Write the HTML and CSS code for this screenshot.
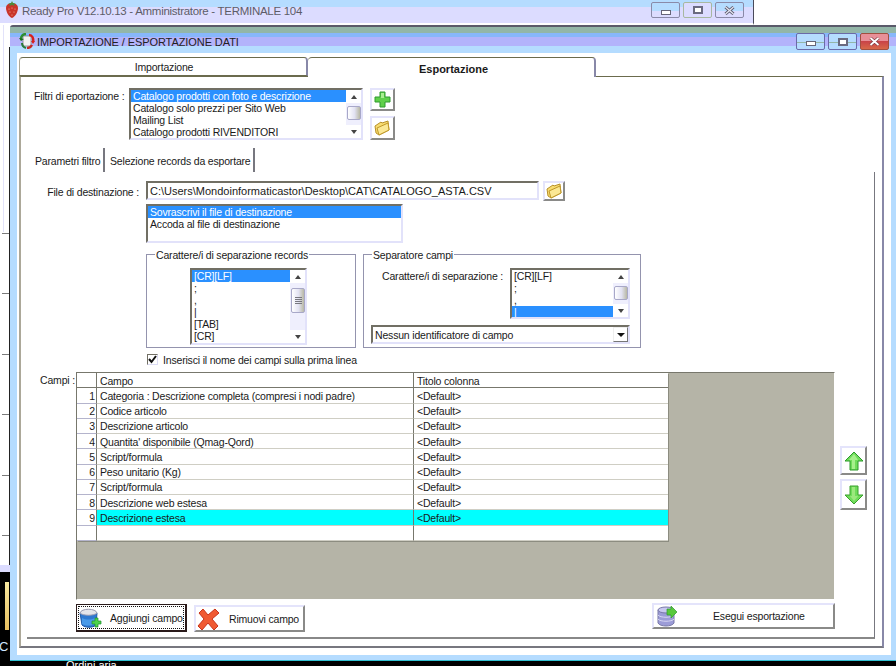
FILE: index.html
```html
<!DOCTYPE html>
<html lang="it">
<head>
<meta charset="utf-8">
<title>Ready Pro</title>
<link rel="stylesheet" href="styles.css">
</head>
<body>
<div class="desktop">
  <div class="desk-black">
    <div class="desk-file"></div>
    <div class="desk-pc">C</div>
    <div class="desk-label">Ordini aria...</div>
  </div>
  <div class="back-strip"></div>
  <header class="back-window">
    <svg class="straw" width="14" height="18" viewBox="0 0 14 18"><path d="M7 3C3 2 1 4 1 7c0 4 3 9 6 10 3-1 6-6 6-10 0-3-2-5-6-4z" fill="#c9352a"/><path d="M3 2l2 1-1 2 3-1 3 1-1-2 2-1-3 0-1-2-1 2z" fill="#4f8a3a"/><g fill="#f3b9a0"><circle cx="4" cy="8" r=".6"/><circle cx="7" cy="7" r=".6"/><circle cx="10" cy="8" r=".6"/><circle cx="5" cy="11" r=".6"/><circle cx="9" cy="11" r=".6"/><circle cx="7" cy="14" r=".6"/></g></svg>
    <span class="back-title">Ready Pro V12.10.13 - Amministratore - TERMINALE 104</span>
    <div class="winbtns">
      <span class="wb"><i class="g-min"></i></span>
      <span class="wb wb-active"><i class="g-max"></i></span>
      <span class="wb"><svg class="g-x" width="11" height="9" viewBox="0 0 11 9"><path d="M1.5 1l8 7M9.5 1l-8 7" stroke="#5c5c70" stroke-width="3"/><path d="M1.5 1l8 7M9.5 1l-8 7" stroke="#e8e8f4" stroke-width="1.2"/></svg></span>
    </div>
  </header>

  <main class="window">
    <div class="titlebar">
      <svg class="ticon" width="16" height="16" viewBox="0 0 16 16"><rect x="4" y="3" width="8" height="10" fill="#f2f2f2" stroke="#777" stroke-width=".7"/><path d="M7 1C4 1 2 3 2 6" fill="none" stroke="#2f8f2f" stroke-width="2.4"/><path d="M0 5l2 3 3-2z" fill="#1a6d1a"/><path d="M3 10c0 2 1 4 4 5" fill="none" stroke="#2a7a3a" stroke-width="2"/><path d="M10 2c3 0 5 3 4 7" fill="none" stroke="#d8201c" stroke-width="2.4"/><path d="M12 8l2 3 2-3z" fill="#d8201c"/><path d="M13 12c-1 2-3 3-5 3" fill="none" stroke="#c82a24" stroke-width="2.4"/></svg>
      <span class="ttext">IMPORTAZIONE / ESPORTAZIONE DATI</span>
      <div class="winbtns winbtns-main">
        <span class="wb wb2"><i class="g-min"></i></span>
        <span class="wb wb2"><i class="g-max"></i></span>
        <span class="wb wb2 wb-close"><svg class="g-x" width="11" height="9" viewBox="0 0 11 9"><path d="M1.5 1l8 7M9.5 1l-8 7" stroke="#7c3a40" stroke-width="3.2"/><path d="M1.5 1l8 7M9.5 1l-8 7" stroke="#fff" stroke-width="1.8"/></svg></span>
      </div>
    </div>

    <div class="client">
      <nav class="tabs">
        <span class="tab">Importazione</span>
        <span class="tab tab-on">Esportazione</span>
      </nav>
      <section class="page">
        <div class="filters">
          <label class="filters-label">Filtri di eportazione :</label>
          <div class="list list-filters">
            <div class="items">
              <div class="item sel">Catalogo prodotti con foto e descrizione</div>
              <div class="item">Catalogo solo prezzi per Sito Web</div>
              <div class="item">Mailing List</div>
              <div class="item">Catalogo prodotti RIVENDITORI</div>
            </div>
            <div class="sb"><span class="sb-up"></span><span class="thumb thumb-a"></span><span class="sb-down"></span></div>
          </div>
          <div class="iconcol">
            <button class="btn btn-icon"><svg width="17" height="17" viewBox="0 0 17 17"><path d="M6 1h5v5h5v5h-5v5H6v-5H1V6h5z" fill="#5fd04a" stroke="#2f9a2f"/><path d="M7 2h3v5H7z" fill="#a8ee90"/></svg></button>
            <button class="btn btn-icon btn-icon2"><svg width="17" height="16" viewBox="0 0 17 16"><path d="M1 6l6-4 1 1 6-2 1 9-10 5-3-2z" fill="#f8dc70" stroke="#b8902a"/><path d="M3 8l11-5 1 7-10 5z" fill="#fbe894" stroke="#c09828"/></svg></button>
          </div>
        </div>

        <nav class="subtabs">
          <span class="subtab subtab-on">Parametri filtro</span>
          <span class="subtab">Selezione records da esportare</span>
        </nav>

        <section class="subpage">
          <div class="file-row">
            <label class="file-label">File di destinazione :</label>
            <div class="input">C:\Users\Mondoinformaticastor\Desktop\CAT\CATALOGO_ASTA.CSV</div>
            <button class="btn btn-file"><svg width="17" height="16" viewBox="0 0 17 16"><path d="M1 6l6-4 1 1 6-2 1 9-10 5-3-2z" fill="#f8dc70" stroke="#b8902a"/><path d="M3 8l11-5 1 7-10 5z" fill="#fbe894" stroke="#c09828"/></svg></button>
          </div>

          <div class="options">
            <div class="list list-mode">
              <div class="items">
                <div class="item sel">Sovrascrivi il file di destinazione</div>
                <div class="item">Accoda al file di destinazione</div>
              </div>
            </div>

            <div class="groups">
              <div class="group group-rec">
                <div class="legend">Carattere/i di separazione records</div>
                <div class="list list-rec">
                  <div class="items">
                    <div class="item sel">[CR][LF]</div>
                    <div class="item">;</div>
                    <div class="item">,</div>
                    <div class="item">|</div>
                    <div class="item">[TAB]</div>
                    <div class="item">[CR]</div>
                  </div>
                  <div class="sb"><span class="sb-up"></span><span class="thumb thumb-b"></span><span class="sb-down"></span></div>
                </div>
              </div>
              <div class="group group-sep">
                <div class="legend">Separatore campi</div>
                <div class="sep-row">
                  <label class="sep-label">Carattere/i di separazione :</label>
                  <div class="list list-sep">
                    <div class="items">
                      <div class="item">[CR][LF]</div>
                      <div class="item">;</div>
                      <div class="item">,</div>
                      <div class="item sel">|</div>
                    </div>
                    <div class="sb"><span class="sb-up"></span><span class="thumb thumb-a"></span><span class="sb-down"></span></div>
                  </div>
                </div>
                <div class="combo">
                  <span>Nessun identificatore di campo</span>
                  <span class="combo-btn"><i></i></span>
                </div>
              </div>
            </div>

            <label class="check">
              <span class="check-box"><svg width="9" height="9" viewBox="0 0 9 9"><path d="M1 4l2.5 3L8 1" fill="none" stroke="#111" stroke-width="2"/></svg></span>
              Inserisci il nome dei campi sulla prima linea
            </label>
          </div>

          <div class="fields">
            <label class="fields-label">Campi :</label>
            <div class="gridbox">
              <table class="grid">
                <colgroup><col class="c-num"><col class="c-camp"><col></colgroup>
                <thead><tr><th></th><th>Campo</th><th>Titolo colonna</th></tr></thead>
                <tbody>
                  <tr><td class="n">1</td><td>Categoria : Descrizione completa (compresi i nodi padre)</td><td>&lt;Default&gt;</td></tr>
                  <tr><td class="n">2</td><td>Codice articolo</td><td>&lt;Default&gt;</td></tr>
                  <tr><td class="n">3</td><td>Descrizione articolo</td><td>&lt;Default&gt;</td></tr>
                  <tr><td class="n">4</td><td>Quantita' disponibile (Qmag-Qord)</td><td>&lt;Default&gt;</td></tr>
                  <tr><td class="n">5</td><td>Script/formula</td><td>&lt;Default&gt;</td></tr>
                  <tr><td class="n">6</td><td>Peso unitario (Kg)</td><td>&lt;Default&gt;</td></tr>
                  <tr><td class="n">7</td><td>Script/formula</td><td>&lt;Default&gt;</td></tr>
                  <tr><td class="n">8</td><td>Descrizione web estesa</td><td>&lt;Default&gt;</td></tr>
                  <tr class="cur"><td class="n">9</td><td>Descrizione estesa</td><td>&lt;Default&gt;</td></tr>
                  <tr><td class="n"></td><td></td><td></td></tr>
                </tbody>
              </table>
            </div>
            <div class="moves">
              <button class="btn btn-move"><svg width="20" height="20" viewBox="0 0 20 20"><path d="M10 1l9 9h-5v9H6v-9H1z" fill="#6fdc5a" stroke="#2c9a2c"/><path d="M10 3l-5 6h3v9h3V9h3z" fill="#a6f08c"/></svg></button>
              <button class="btn btn-move"><svg width="20" height="20" viewBox="0 0 20 20"><path d="M10 19l9-9h-5V1H6v9H1z" fill="#6fdc5a" stroke="#3aa02c"/><path d="M8 2h3v9h3l-4 5-4-5h2z" fill="#9ce87e"/></svg></button>
            </div>
          </div>

          <div class="actions">
            <button class="btn btn-act btn-default"><span class="focus">
              <svg width="23" height="20" viewBox="0 0 23 20"><path d="M1 5c4-3 14-3 17 0l-1 12c-3 3-11 3-14 0z" fill="#2f78d0" stroke="#1f5aa8"/><path d="M3 10c4 2 9 2 13 0v6c-4 2-9 2-13 0z" fill="#4a9ae8"/><path d="M1 5c1-5 16-5 17 0-3 3-14 3-17 0z" fill="#e4e4ea" stroke="#9a9ab0"/><path d="M16 10h3v3h3v3h-3v3h-3v-3h-3v-3h3z" fill="#4cd24c" stroke="#1f8f2f" stroke-width=".7"/></svg>
              <span class="act-text">Aggiungi campo</span>
            </span></button>
            <button class="btn btn-act btn-rem">
              <svg width="23" height="22" viewBox="0 0 23 22"><path d="M2 5l4-4 5 6 7-6 4 4-7 6 6 7-4 4-6-7-6 7-4-4 6-7z" fill="#f05a32" stroke="#c8341c"/></svg>
              <span class="act-text">Rimuovi campo</span>
            </button>
            <button class="btn btn-run">
              <svg width="21" height="22" viewBox="0 0 21 22"><path d="M1 5v13c2 4 14 4 16 0V5z" fill="#9c9cd8" stroke="#7878a8"/><path d="M1 10c2 3 14 3 16 0M1 14c2 3 14 3 16 0" fill="none" stroke="#d6d6f2"/><ellipse cx="9" cy="5" rx="8" ry="3" fill="#c8c8f0" stroke="#7878a8"/><path d="M10 4h4V1l6 6-6 6v-3h-4z" fill="#58c83c" stroke="#2f9a2f" stroke-width=".7"/></svg>
              <span class="run-text">Esegui esportazione</span>
            </button>
          </div>
        </section>
      </section>
    </div>
  </main>
</div>
</body>
</html>
```
FILE: styles.css
```css
* { box-sizing: border-box; }
html, body { margin: 0; padding: 0; }
body { background: #fff; font: 10.5px/12px "Liberation Sans", Arial, sans-serif; letter-spacing: -.18px; color: #1a1a1a; overflow: hidden; }
.desktop { position: relative; width: 896px; height: 666px; overflow: hidden; background: #fff; }
svg { flex: none; display: block; }
label { white-space: nowrap; }

/* Desktop behind the windows */
.desk-black { position: absolute; left: 0; top: 572px; width: 896px; height: 94px; background: #000; }
.desk-file { position: absolute; left: 5px; top: 10px; width: 4px; height: 48px; background: linear-gradient(#f8e8a0, #e8c060); }
.desk-pc { position: absolute; left: -1px; top: 68px; color: #cfe6ff; font-size: 13px; line-height: 14px; letter-spacing: 0; }
.desk-label { position: absolute; left: 66px; top: 87px; color: #fff; font-size: 11px; line-height: 12px; letter-spacing: 0; white-space: nowrap; }
.back-strip {
  position: absolute; left: 0; top: 24px; width: 10px; height: 548px;
  background:
    linear-gradient(#222, #222) 9px 23px / 1px 518px no-repeat,
    linear-gradient(#dcdcff, #dcdcff) 0 541px / 10px 7px no-repeat,
    repeating-linear-gradient(#fff 0, #fff 1px, #7a7a7a 1px, #7a7a7a 2px, #fff 2px, #fff 60.4px) 2px 208px / 7px 340px no-repeat,
    linear-gradient(90deg, #fff 3px, #e2e2fa 3px, #e2e2fa 4px, #fff 4px);
}
.back-window {
  position: absolute; left: 0; top: 0; width: 754px; height: 25px;
  display: flex; align-items: center; padding: 0 9px 3px 5px;
  border-right: 1px solid #4a4a5a; border-bottom: 2px solid #fff;
  background: linear-gradient(#b5dcff 0, #b5dcff 7px, #dcdcff 7px);
}
.back-title { margin: 1px 0 0 3px; font-size: 11.5px; letter-spacing: -.29px; color: #5c5c68; white-space: nowrap; }
.winbtns { margin-left: auto; display: flex; gap: 3px; }
.wb { width: 29px; height: 16px; display: flex; align-items: center; justify-content: center; border: 1px solid #8a8aa8; border-radius: 2px; background: linear-gradient(#b5dcff 0, #b5dcff 55%, #dcdcff 55%); }
.wb-active { border-color: #a8b8a0; background: #dcdcff; }
.g-min { display: block; width: 10px; height: 5px; margin-top: 4px; border: 1px solid #666678; background: #fff; }
.g-max { display: block; width: 10px; height: 8px; border: 2px solid #6a6a80; background: #fff; }

/* Main window */
.window {
  position: absolute; left: 10px; top: 25px; width: 886px; height: 636px;
  display: flex; flex-direction: column;
  border-top: 2px solid #5a5a6a;
  border-bottom: 1px solid #30c0d0;
  border-top-left-radius: 3px;
  background: #b5dcff;
}
.titlebar {
  flex: none; height: 26px; display: flex; align-items: center; padding: 9px 7px 0 8px;
  background: linear-gradient(#93b6a8 0, #93b6a8 6px, #87b7fb 6px, #87b7fb 10px, #b3b3fb 10px, #b3b3fb 19px, #b5dcff 19px);
}
.ticon { margin: 0 0 7px 1px; }
.ttext { margin: 0 0 5px 2px; font-size: 11px; letter-spacing: -.08px; color: #222; white-space: nowrap; }
.winbtns-main { margin: -1px 0 5px auto; }
.wb2 { height: 17px; border-color: #6a6aa8; background: linear-gradient(#b5dcff 0, #b5dcff 50%, #93b6a8 50%, #93b6a8 60%, #b5dcff 60%); }
.wb-close { border-color: #a05040; background: linear-gradient(#e89098 0, #e89098 45%, #c84048 45%, #d86848 100%); }

.client { flex: none; height: 602px; margin: 0 5px 0 7px; padding: 4px 7px 0 2px; background: #fff; display: flex; flex-direction: column; }
.tabs { flex: none; display: flex; height: 20px; position: relative; z-index: 1; }
.tab {
  width: 289px; height: 19px; display: flex; align-items: center; justify-content: center; padding-left: 2px;
  border: 1px solid #6b6b4d; border-bottom: 1px solid #6b6b4d; border-right: 2px solid #8888a8; border-left-color: #aca899;
  border-top-left-radius: 4px; border-top-right-radius: 4px; background: #fff;
}
.tab-on { width: 288px; height: 20px; padding: 3px 0 0 5px; font-size: 11px; letter-spacing: 0; font-weight: bold; border-bottom: none; border-left: none; }
.page {
  flex: none; height: 572px; margin-top: -1px; padding-top: 11px;
  border-top: 1px solid #6b6b4d; border-left: 2px solid #aca899; border-right: 2px solid #8888a8; border-bottom: 2px solid #77777f;
  display: flex; flex-direction: column;
}

/* Shared controls */
.list { display: flex; background: #fff; border: 2px solid; border-color: #716f64 #e2e2fa #e2e2fa #716f64; overflow: hidden; }
.items { flex: 1; min-width: 0; }
.item { height: 12px; line-height: 12px; padding-left: 2px; white-space: nowrap; }
.sel { background: #2a90ff; color: #fff; }
.sb { flex: none; width: 15px; display: flex; flex-direction: column; justify-content: space-between; position: relative; background: #efeffd; }
.sb-up, .sb-down { height: 13px; display: flex; align-items: center; justify-content: center; background: #fff; }
.sb-up::before { content: ""; border: 3px solid transparent; border-top: 0; border-bottom: 4px solid #444; }
.sb-down::before { content: ""; border: 3px solid transparent; border-bottom: 0; border-top: 4px solid #444; }
.thumb { position: absolute; left: 1px; right: 0; background: linear-gradient(90deg, #fff, #e2e2f2 55%, #b8b8a4); border: 1px solid #a8a8c8; border-radius: 2px; }
.thumb-a { top: 16px; height: 14px; }
.thumb-b {
  top: 18px; height: 25px;
  background:
    repeating-linear-gradient(#77777f 0, #77777f 1px, transparent 1px, transparent 2px) 3px 8px / 7px 7px no-repeat,
    linear-gradient(90deg, #fff, #e2e2f2 55%, #b8b8a4);
}
.btn { display: flex; align-items: center; padding: 0; margin: 0; font: inherit; letter-spacing: inherit; color: inherit; background: #fff; border: 2px solid; border-color: #e4e4fb #8a8a88 #8a8a88 #e4e4fb; }

/* Filter row */
.filters { flex: none; display: flex; height: 52px; margin-left: 13px; }
.filters-label { width: 95px; padding-top: 2px; }
.list-filters { width: 234px; }
.iconcol { margin-left: 7px; display: flex; flex-direction: column; justify-content: space-between; }
.btn-icon { width: 25px; height: 23px; justify-content: center; }
.btn-icon2 { height: 24px; }

/* Sub tabs */
.subtabs { flex: none; height: 24px; margin: 8px 0 0 12px; display: flex; }
.subtab { height: 24px; display: flex; align-items: center; padding: 1px 5px 0 5px; border-right: 2px solid #77777f; white-space: nowrap; }
.subtab-on { width: 72px; padding-left: 2px; }
.subtab + .subtab { width: 150px; }

.subpage { flex: none; width: 848px; height: 467px; margin-left: 6px; padding-top: 9px; border-right: 1px solid #77777f; border-bottom: 2px solid #888; display: flex; flex-direction: column; position: relative; }

.file-row { flex: none; display: flex; align-items: flex-start; height: 20px; }
.file-label { width: 112px; text-align: right; padding-top: 5px; }
.input { width: 393px; height: 19px; margin-left: 7px; padding: 2px 0 0 2px; font-size: 11px; letter-spacing: 0; line-height: 13px; border: 2px solid; border-color: #716f64 #e2e2fa #e2e2fa #716f64; white-space: nowrap; }
.btn-file { width: 22px; height: 20px; margin-left: 4px; justify-content: center; }

.options { flex: none; padding-left: 119px; }
.list-mode { width: 257px; height: 39px; margin-top: 3px; }
.groups { display: flex; gap: 7px; margin-top: 11px; }
.group { height: 94px; border: 1px solid #9494ae; background: #fff; }
.legend { width: fit-content; margin: -6px 0 0 8px; padding: 0 1px; background: #fff; line-height: 12px; }
.group-rec { width: 210px; }
.group-sep { width: 278px; padding: 0 10px 0 7px; }
.group-sep .legend { margin-left: 1px; }
.list-rec { width: 117px; height: 77px; margin: 7px 0 0 43px; }
.list-sep { width: 120px; height: 51px; }
.sep-row { display: flex; margin-top: 7px; }
.sep-label { width: 139px; padding: 2px 0 0 11px; white-space: nowrap; }
.combo { display: flex; align-items: center; justify-content: space-between; height: 19px; margin-top: 6px; padding-left: 2px; border: 2px solid; border-color: #716f64 #e2e2fa #e2e2fa #716f64; }
.combo-btn { width: 15px; height: 15px; display: flex; align-items: center; justify-content: center; background: #fff; border: 1px solid; border-color: #eee #777 #777 #eee; }
.combo-btn i { border: 4px solid transparent; border-bottom: 0; border-top: 4px solid #111; }
.check { display: flex; align-items: center; gap: 5px; height: 11px; margin: 6px 0 0 1px; white-space: nowrap; }
.check-box { width: 11px; height: 11px; display: flex; align-items: center; justify-content: center; background: #fff; border: 1px solid; border-color: #716f64 #dcdcf4 #dcdcf4 #716f64; }

/* Field grid */
.fields { flex: none; display: flex; margin-top: 7px; height: 228px; }
.fields-label { width: 49px; padding: 2px 0 0 13px; }
.gridbox { width: 759px; height: 228px; background: #b5b4a7; border: 1px solid; border-color: #77776c #fff #fff #77776c; }
.grid { width: 591px; height: 168px; table-layout: fixed; border-collapse: separate; border-spacing: 0; background: #fff; box-shadow: 1px 1px 0 #8c8c80; }
.c-num { width: 20px; }
.c-camp { width: 317px; }
.grid th, .grid td { height: 15.25px; padding: 1px 0 0 3px; font-weight: normal; text-align: left; line-height: 12px; white-space: nowrap; overflow: hidden; border-right: 1px solid #77776c; border-bottom: 1px solid #cfcec4; }
.grid th { border-bottom-color: #77776c; }
.grid td:last-child, .grid th:last-child { border-right: 0; }
.grid .n { padding: 1px 1px 0 0; text-align: right; border-bottom-color: #b4b4cc; }
.cur td { background: #00ffff; }
.cur .n { background: #fff; }
.moves { display: flex; flex-direction: column; gap: 4px; margin: 74px 0 0 5px; }
.btn-move { width: 27px; height: 29px; justify-content: center; }
.btn-move + .btn-move { height: 31px; }

/* Action buttons */
.actions { flex: none; display: flex; align-items: flex-start; margin: 4px 0 0 49px; }
.btn-act { width: 111px; height: 28px; }
.btn-default { border: 1px solid #2a1a1a; border-width: 1px 2px 2px 1px; padding: 1px; }
.focus { display: flex; align-items: center; width: 100%; height: 100%; padding-left: 0; border: 1px dotted #111; white-space: nowrap; }
.act-text { margin-left: 8px; }
.btn-rem { margin: 1px 0 0 7px; padding-left: 1px; height: 27px; white-space: nowrap; }
.btn-rem .act-text { margin-left: 9px; }
.btn-run { width: 183px; height: 26px; margin: -1px 0 0 347px; padding-left: 3px; white-space: nowrap; }
.run-text { margin-left: 35px; }
```
